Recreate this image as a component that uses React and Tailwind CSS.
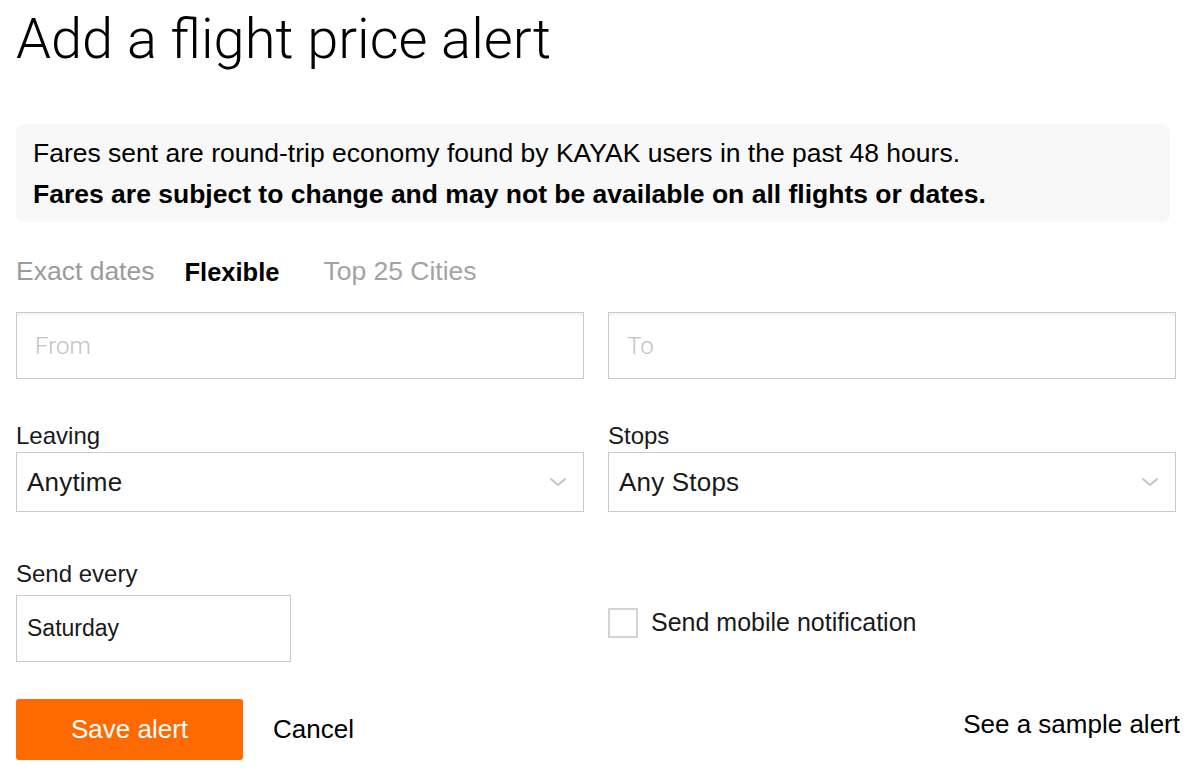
import React from "react";

const Chevron = () => (
  <svg width="18" height="10" viewBox="0 0 18 10" fill="none" className="shrink-0">
    <path d="M2 2l7 6 7-6" stroke="#c4c4c4" strokeWidth="2" strokeLinecap="round" strokeLinejoin="round" />
  </svg>
);

const TextField = ({ placeholder }) => (
  <div className="flex-1 h-[67px] border border-[#c9c9c9] shadow-[inset_0_2px_3px_rgba(0,0,0,0.06)] flex items-center pl-[18px]">
    <span className="font-['Roboto',sans-serif] font-light text-[24px] text-[#c2c2c2]">{placeholder}</span>
  </div>
);

const SelectField = ({ label, value }) => (
  <div className="flex-1">
    <div className="text-[24px] leading-[28px] text-[#1a1a1a]">{label}</div>
    <div className="mt-[2px] h-[60px] border border-[#c9c9c9] flex items-center justify-between pl-[10px] pr-[16px]">
      <span className="text-[26px] tracking-[0.2px] text-[#1a1a1a]">{value}</span>
      <Chevron />
    </div>
  </div>
);

export default function App() {
  return (
    <div className="w-[1200px] h-[778px] overflow-hidden bg-white pl-4 pr-6 font-['Liberation_Sans',Arial,sans-serif] text-[#1a1a1a]">
      <h1 className="pt-[9px] font-['Roboto',sans-serif] font-light text-[56px] leading-[60px] text-black">
        Add a flight price alert
      </h1>

      <div className="mt-[55px] h-[98px] w-[1154px] rounded-lg bg-[#f8f8f8] pl-[17px] pt-[9px] text-[26.5px] leading-[41px] text-black">
        <p>Fares sent are round-trip economy found by KAYAK users in the past 48 hours.</p>
        <p className="font-bold">Fares are subject to change and may not be available on all flights or dates.</p>
      </div>

      <div className="mt-[35px] flex items-center h-[30px] text-[26.5px]">
        <span className="text-[#9b9b9b]">Exact dates</span>
        <span className="ml-[30px] text-[25.5px] font-bold text-black">Flexible</span>
        <span className="ml-[44px] text-[#a3a3a3]">Top 25 Cities</span>
      </div>

      <div className="mt-[25px] flex gap-6">
        <TextField placeholder="From" />
        <TextField placeholder="To" />
      </div>

      <div className="mt-[43px] flex gap-6">
        <SelectField label="Leaving" value="Anytime" />
        <SelectField label="Stops" value="Any Stops" />
      </div>

      <div className="mt-[48px] flex gap-6">
        <div className="flex-1">
          <div className="text-[24px] leading-[28px]">Send every</div>
          <div className="mt-[7px] w-[275px] h-[67px] border border-[#c9c9c9] flex items-center pl-[10px]">
            <span className="text-[23px]">Saturday</span>
          </div>
        </div>
        <div className="flex-1 pt-[44px]">
          <label className="flex items-center">
            <span className="w-[30px] h-[30px] border-2 border-[#d4d4d4] bg-white" />
            <span className="ml-[13px] text-[25px]">Send mobile notification</span>
          </label>
        </div>
      </div>

      <div className="mt-[37px] flex items-center">
        <button className="w-[227px] h-[61px] rounded-[3px] bg-[#ff6a00] text-white text-[26px]">Save alert</button>
        <button className="ml-[30px] text-[26px] text-black">Cancel</button>
        <a className="ml-auto -mr-1 -mt-[10px] text-[26px] text-black">See a sample alert</a>
      </div>
    </div>
  );
}
